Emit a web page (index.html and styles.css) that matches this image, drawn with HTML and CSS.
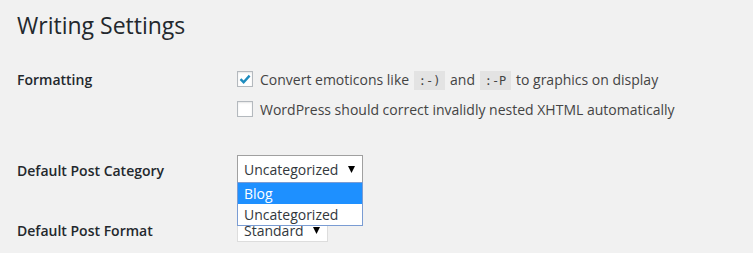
FILE: index.html
```html
<!DOCTYPE html>
<html lang="en">
<head>
  <meta charset="UTF-8">
  <title>Writing Settings</title>
  <link rel="stylesheet" href="styles.css">
</head>
<body>
  <div class="wrap">
    <h1>Writing Settings</h1>

    <div class="row row-format">
      <div class="label">Formatting</div>
      <div class="field">
        <label class="check">
          <span class="box">
            <svg width="12" height="10" viewBox="0 0 12 10"><path d="M1.5 5.2 L4.6 8.2 L10.6 1.6" fill="none" stroke="#1e8cbe" stroke-width="2.4"/></svg>
          </span>
          <span class="text">Convert emoticons like <code>:-)</code> and <code>:-P</code> to graphics on display</span>
        </label>
        <label class="check">
          <span class="box"></span>
          <span class="text">WordPress should correct invalidly nested XHTML automatically</span>
        </label>
      </div>
    </div>

    <div class="row row-cat">
      <div class="label">Default Post Category</div>
      <div class="field">
        <div class="select-wrap">
          <div class="select"><span>Uncategorized</span><svg class="arrow" width="7" height="7" viewBox="0 0 7 7"><path d="M0 0 H7 L3.5 7 Z" fill="#000"/></svg></div>
          <ul class="dropdown">
            <li class="active">Blog</li>
            <li>Uncategorized</li>
          </ul>
        </div>
      </div>
    </div>

    <div class="row row-post">
      <div class="label">Default Post Format</div>
      <div class="field">
        <div class="select select-small"><span>Standard</span><svg class="arrow" width="7" height="7" viewBox="0 0 7 7"><path d="M0 0 H7 L3.5 7 Z" fill="#000"/></svg></div>
      </div>
    </div>
  </div>
</body>
</html>
```

FILE: styles.css
```css
body {
  margin: 0;
  background: #f1f1f1;
  color: #444;
  font-family: "Open Sans", sans-serif;
  font-size: 14px;
}
.wrap {
  padding: 0 17px;
}
h1 {
  margin: 0;
  padding: 9px 0 0;
  font-size: 23px;
  font-weight: 400;
  line-height: 32px;
  color: #23282d;
}
.row {
  display: flex;
}
.label {
  width: 220px;
  flex: none;
  font-weight: 600;
  color: #23282d;
}
.row-format {
  margin-top: 28px;
}
.row-format .label {
  padding-top: 1px;
}
.check {
  display: flex;
  align-items: center;
  height: 20px;
  margin-bottom: 10px;
}
.box {
  box-sizing: border-box;
  width: 16px;
  height: 16px;
  flex: none;
  border: 1px solid #b4b9be;
  background: #fff;
  margin-right: 7px;
  display: flex;
  align-items: center;
  justify-content: center;
  box-shadow: inset 0 1px 2px rgba(0,0,0,.1);
}
.text {
  white-space: nowrap;
}
code {
  font-family: "DejaVu Sans Mono", monospace;
  font-size: 12px;
  background: #e3e3e3;
  padding: 3px 5px 2px;
  margin: 0 1px;
}
.row-cat {
  margin-top: 26px;
}
.row-cat .label {
  padding-top: 6px;
}
.row-post .label {
  padding-top: 5px;
}
.select-wrap {
  position: relative;
}
.select {
  box-sizing: border-box;
  width: 126px;
  height: 28px;
  border: 1px solid #a0a0a0;
  background: #fff;
  padding: 0 7px 0 6px;
  display: flex;
  align-items: center;
  justify-content: space-between;
  color: #32373c;
}
.dropdown {
  position: absolute;
  left: 0;
  top: 27px;
  box-sizing: border-box;
  width: 126px;
  margin: 0;
  padding: 0;
  list-style: none;
  background: #fff;
  border: 1px solid #7a9cd3;
  z-index: 2;
}
.dropdown li {
  height: 21px;
  line-height: 21px;
  padding: 0 6px;
  color: #32373c;
}
.dropdown li.active {
  background: #1e90ff;
  color: #fff;
}
.row-post {
  margin-top: 33px;
}
.select-small {
  width: 91px;
  height: 26px;
  padding-top: 3px;
  border-color: #ddd;
}
```
